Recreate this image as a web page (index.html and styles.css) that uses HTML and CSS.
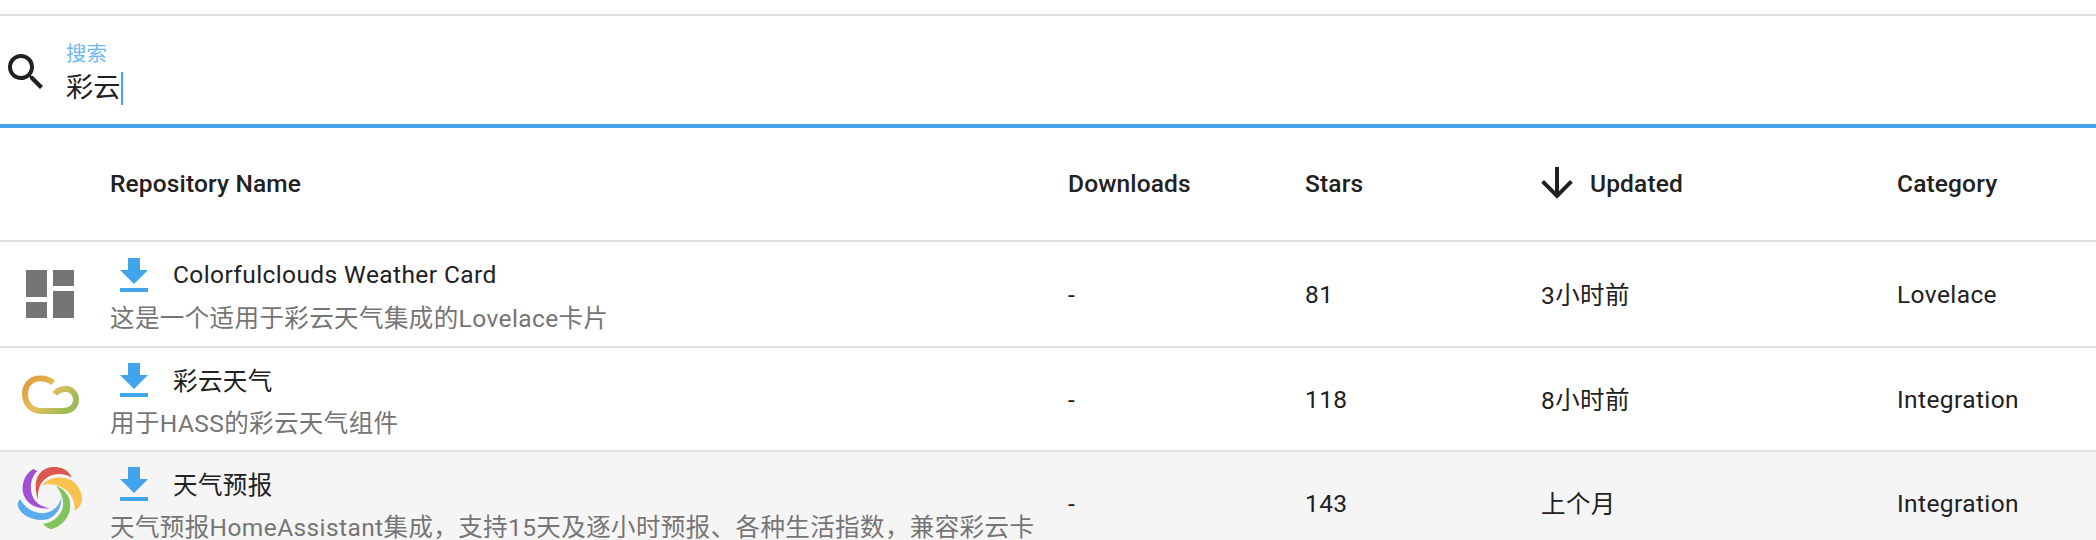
FILE: index.html
```html
<!DOCTYPE html>
<html lang="zh-CN">
<head>
    <meta charset="UTF-8">
    <title>Store</title>
    <link rel="stylesheet" href="styles.css">
</head>
<body>
    <div class="search">
        <svg class="search-icon" viewBox="0 0 24 24"><path d="M9.5,3A6.5,6.5 0 0,1 16,9.5C16,11.11 15.41,12.59 14.44,13.73L14.71,14H15.5L20.5,19L19,20.5L14,15.5V14.71L13.73,14.44C12.59,15.41 11.11,16 9.5,16A6.5,6.5 0 0,1 3,9.5A6.5,6.5 0 0,1 9.5,3M9.5,5C7,5 5,7 5,9.5C5,12 7,14 9.5,14C12,14 14,12 14,9.5C14,7 12,5 9.5,5Z"/></svg>
        <div class="search-field">
            <label class="search-label">搜索</label>
            <div class="search-value">彩云<span class="caret"></span></div>
        </div>
    </div>

    <div class="row head">
        <div></div>
        <div>Repository Name</div>
        <div>Downloads</div>
        <div>Stars</div>
        <div class="sorted">
            <svg class="sort-icon" viewBox="0 0 24 24"><path d="M11,4H13V16L18.5,10.5L19.92,11.92L12,19.84L4.08,11.92L5.5,10.5L11,16V4Z"/></svg>
            <span>Updated</span>
        </div>
        <div>Category</div>
    </div>

    <div class="row item item-first">
        <div class="type">
            <svg class="type-icon" viewBox="0 0 48 48"><rect x="0" y="0" width="21" height="27"/><rect x="27" y="0" width="21" height="16"/><rect x="27" y="21" width="21" height="27"/><rect x="0" y="32" width="21" height="16"/></svg>
        </div>
        <div class="name">
            <div class="title">
                <svg class="dl-icon" viewBox="0 0 24 24"><path d="M5,20H19V18H5M19,9H15V3H9V9H5L12,16L19,9Z"/></svg>
                <span>Colorfulclouds Weather Card</span>
            </div>
            <div class="desc">这是一个适用于彩云天气集成的Lovelace卡片</div>
        </div>
        <div>-</div>
        <div>81</div>
        <div class="when">3小时前</div>
        <div>Lovelace</div>
    </div>

    <div class="row item">
        <div class="type">
            <svg class="logo" viewBox="0 0 72 72">
                <defs>
                    <linearGradient id="cloudGrad" x1="0" y1="0" x2="1" y2="0.6">
                        <stop offset="0" stop-color="#e2973a"/>
                        <stop offset="0.55" stop-color="#e3c05c"/>
                        <stop offset="1" stop-color="#9dbc58"/>
                    </linearGradient>
                </defs>
                <path d="M39 20C35 16 30 15 25 15.5C16 16 11 23 11 31C11 41 18 48 27 48H50C57 48 62 43 62 37C62 31 58 26 52 26C47 26 43 28 41 31" fill="none" stroke="url(#cloudGrad)" stroke-width="6"/>
            </svg>
        </div>
        <div class="name">
            <div class="title">
                <svg class="dl-icon" viewBox="0 0 24 24"><path d="M5,20H19V18H5M19,9H15V3H9V9H5L12,16L19,9Z"/></svg>
                <span>彩云天气</span>
            </div>
            <div class="desc">用于HASS的彩云天气组件</div>
        </div>
        <div>-</div>
        <div>118</div>
        <div class="when">8小时前</div>
        <div>Integration</div>
    </div>

    <div class="row item hovered">
        <div class="type">
            <svg class="logo" viewBox="42 84 216 216">
                <path fill="#a04fd6" d="M100 90C80 100 66 125 68 155C72 190 105 212 150 208C122 204 100 190 94 160C90 135 95 112 112 96Z"/>
                <path fill="#dc5751" d="M213 112C205 90 170 76 140 88C110 100 98 135 114 182C112 150 122 125 148 112C170 102 195 102 214 116Z"/>
                <path fill="#f8c24f" d="M125 140C145 115 180 110 210 122C238 134 250 170 245 190C240 205 232 210 224 215C226 185 212 160 190 148C170 137 145 132 125 140Z"/>
                <path fill="#80c35f" d="M168 142C195 150 215 175 210 210C206 240 180 265 155 270C145 270 135 262 130 255C160 250 180 232 188 208C193 185 185 160 168 142Z"/>
                <path fill="#5cabee" d="M60 180C52 190 52 200 56 208C70 235 110 250 145 240C170 230 185 205 184 176C178 200 160 218 135 222C105 226 75 208 60 180Z"/>
            </svg>
        </div>
        <div class="name">
            <div class="title">
                <svg class="dl-icon" viewBox="0 0 24 24"><path d="M5,20H19V18H5M19,9H15V3H9V9H5L12,16L19,9Z"/></svg>
                <span>天气预报</span>
            </div>
            <div class="desc">天气预报HomeAssistant集成，支持15天及逐小时预报、各种生活指数，兼容彩云卡</div>
        </div>
        <div>-</div>
        <div>143</div>
        <div class="when">上个月</div>
        <div>Integration</div>
    </div>
</body>
</html>
```
FILE: styles.css
```css
html, body {
    height: 540px;
    overflow: hidden;
}
body {
    margin: 0;
    padding-top: 14px;
    background-color: white;
    color: #212121;
    font-family: Roboto, "Noto Sans CJK SC", sans-serif;
    font-size: 24.5px;
    letter-spacing: 0.4px;
}
.search {
    display: flex;
    align-items: center;
    height: 108px;
    border-top: 2px solid #e0e0e0;
    border-bottom: 4px solid #42a5ec;
}
.search-icon {
    width: 48px;
    height: 48px;
    margin-top: 4px;
    margin-left: 2px;
    margin-right: 16px;
    fill: #212121;
}
.search-field {
    padding-top: 6px;
}
.search-label {
    display: block;
    color: #6cb8f0;
    font-size: 20.4px;
    letter-spacing: 0;
    line-height: 26px;
}
.search-value {
    display: flex;
    align-items: center;
    margin-top: 4px;
    font-size: 27.2px;
    letter-spacing: 0;
    line-height: 34px;
}
.caret {
    width: 2px;
    height: 33px;
    margin-left: 1px;
    background-color: #42a5ec;
}
.row {
    display: grid;
    grid-template-columns: 110px 958px 237px 236px 356px 1fr;
    align-items: center;
    box-sizing: border-box;
    border-bottom: 2px solid #e0e0e0;
}
.head {
    height: 114px;
    padding-bottom: 2px;
    font-weight: 500;
    letter-spacing: 0.15px;
}
.sorted {
    display: flex;
    align-items: center;
    gap: 9px;
    margin-left: -8px;
}
.sort-icon {
    width: 48px;
    height: 48px;
    fill: #212121;
}
.item {
    height: 104px;
}
.item-first {
    height: 106px;
}
.hovered {
    background-color: #f5f5f5;
}
.when {
    padding-bottom: 2px;
}
.type {
    display: flex;
    justify-content: center;
    padding-right: 10px;
}
.type-icon {
    width: 48px;
    height: 48px;
    fill: #757575;
}
.logo {
    width: 72px;
    height: 72px;
}
.title {
    display: flex;
    align-items: center;
    gap: 15px;
}
.title span {
    padding-bottom: 3px;
}
.dl-icon {
    width: 48px;
    height: 48px;
    fill: #42a5ec;
}
.desc {
    margin-top: 1px;
    color: #757575;
    line-height: 36px;
}
```
